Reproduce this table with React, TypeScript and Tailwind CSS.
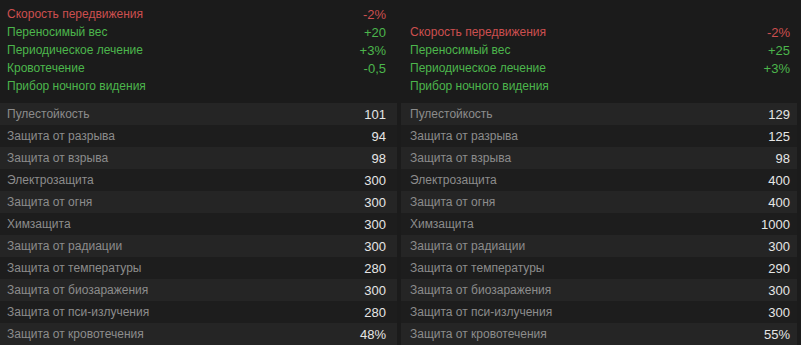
const leftEffects = [
  { name: "Скорость передвижения", value: "-2%", bad: true },
  { name: "Переносимый вес", value: "+20" },
  { name: "Периодическое лечение", value: "+3%" },
  { name: "Кровотечение", value: "-0,5" },
  { name: "Прибор ночного видения", value: "" },
]

const rightEffects = [
  { name: "Скорость передвижения", value: "-2%", bad: true },
  { name: "Переносимый вес", value: "+25" },
  { name: "Периодическое лечение", value: "+3%" },
  { name: "Прибор ночного видения", value: "" },
]

const statNames = [
  "Пулестойкость",
  "Защита от разрыва",
  "Защита от взрыва",
  "Электрозащита",
  "Защита от огня",
  "Химзащита",
  "Защита от радиации",
  "Защита от температуры",
  "Защита от биозаражения",
  "Защита от пси-излучения",
  "Защита от кровотечения",
]

const leftStats = ["101", "94", "98", "300", "300", "300", "300", "280", "300", "280", "48%"]
const rightStats = ["129", "125", "98", "400", "400", "1000", "300", "290", "300", "300", "55%"]

type Effect = { name: string; value: string; bad?: boolean }

const Column = ({ effects, stats, pad }: { effects: Effect[]; stats: string[]; pad: string }) => {
  return (
    <div className="flex flex-col">
      <div className={`flex flex-col justify-end h-[103px] pt-[5px] pb-[8px] ${pad}`}>
        {effects.map((e) => (
          <div
            key={e.name}
            className={`flex justify-between items-center h-[18px] ${e.bad ? "text-[#cc4f4f]" : "text-[#4cb64c]"}`}
          >
            <span>{e.name}</span>
            <span className="text-[13px]">{e.value}</span>
          </div>
        ))}
      </div>
      {statNames.map((name, i) => (
        <div
          key={name}
          className={`flex justify-between items-center h-[22px] ${pad} ${i % 2 === 0 ? "bg-[#252525]" : "bg-[#1d1d1d]"}`}
        >
          <span className="text-[#8c8c8c]">{name}</span>
          <span className="text-[#e6e6e6] text-[13px]">{stats[i]}</span>
        </div>
      ))}
    </div>
  )
}

export default function App() {
  return (
    <div className="w-[801px] h-[345px] overflow-hidden bg-[#1b1b1b] text-[12px] leading-none" style={{ fontFamily: '"Liberation Sans", Arial, sans-serif' }}>
      <div className="grid grid-cols-[397px_396px] gap-x-[4px]">
        <Column effects={leftEffects} stats={leftStats} pad="pl-[7px] pr-[11px]" />
        <Column effects={rightEffects} stats={rightStats} pad="pl-[9px] pr-[7px]" />
      </div>
    </div>
  )
}
